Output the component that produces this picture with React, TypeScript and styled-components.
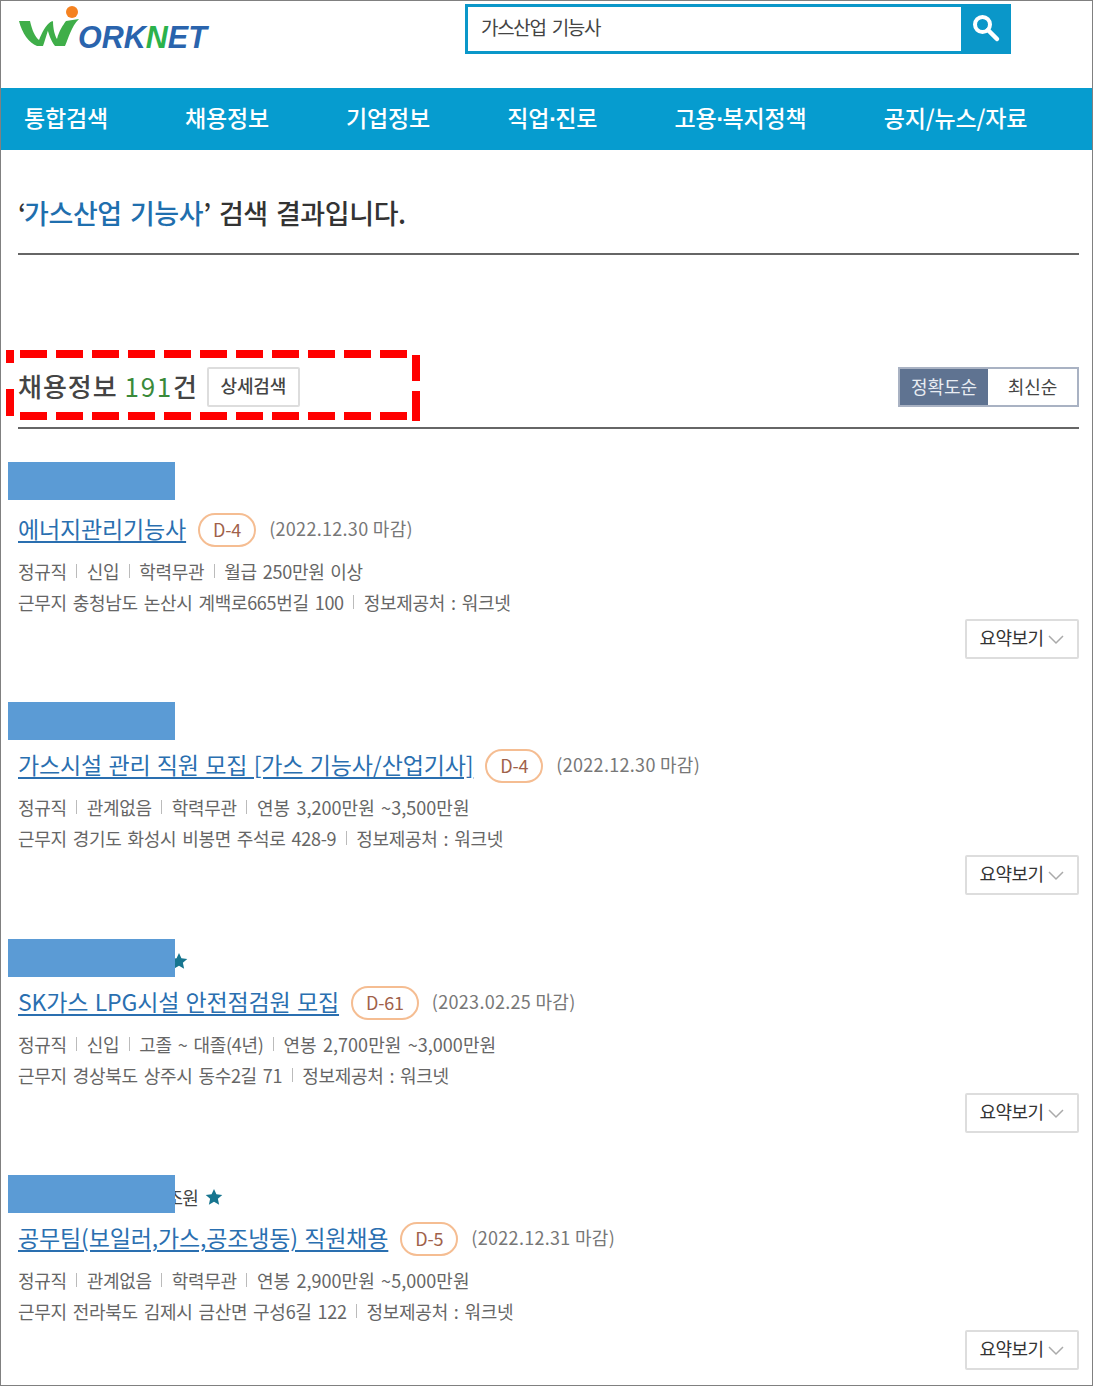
import React from "react";
import styled, { createGlobalStyle } from "styled-components";

const Global = createGlobalStyle`
  html, body { margin: 0; padding: 0; background: #fff; }
  * { box-sizing: border-box; }
  body { font-family: "Noto Sans CJK KR", "Noto Sans", sans-serif; }
`;

const Page = styled.div`
  position: relative;
  width: 1093px;
  height: 1386px;
  border: 1px solid #808080;
  overflow: hidden;
  background: #fff;
`;

const Header = styled.header`
  display: flex;
  height: 87px;
  padding-top: 3px;
`;

const LogoMark = styled.svg`
  display: block;
  width: 220px;
  height: 52px;
  margin-top: -3px;
`;

const SearchBox = styled.div`
  display: flex;
  width: 546px;
  height: 50px;
  margin-left: 244px;
  border: 3px solid #0a97c9;
`;

const SearchField = styled.div`
  flex: 1;
  display: flex;
  align-items: center;
  padding: 0 0 6px 13px;
  font-size: 19px;
  letter-spacing: -1.3px;
  word-spacing: 3px;
  color: #444;
`;

const SearchButton = styled.div`
  width: 47px;
  display: flex;
  align-items: center;
  justify-content: center;
  background: #0a97c9;
  padding: 0 0 3px 3px;
`;

const Nav = styled.nav`
  display: flex;
  gap: 77px;
  align-items: center;
  height: 62px;
  padding: 0 0 4px 23px;
  background: #069ccf;
`;

const NavItem = styled.a`
  font-size: 23px;
  font-weight: 500;
  letter-spacing: -0.15px;
  color: #fff;
  white-space: nowrap;
`;

const NavDot = styled.span`
  font-family: "Liberation Sans", sans-serif;
  font-weight: 700;
  letter-spacing: -1.5px;
`;

const Main = styled.main`
  padding: 0 13px 0 17px;
`;

const ResultTitle = styled.h1`
  display: flex;
  align-items: center;
  height: 105px;
  margin: 0 0 112px;
  padding-top: 22px;
  border-bottom: 2px solid #666;
  font-size: 27px;
  font-weight: 500;
  letter-spacing: -0.4px;
  word-spacing: 2.4px;
  color: #333;
`;

const Quote = styled.span`
  letter-spacing: -2px;
`;

const Keyword = styled.span`
  color: #1f6fae;
`;

const SectionHead = styled.div`
  display: flex;
  align-items: center;
  justify-content: space-between;
  height: 62px;
  padding-bottom: 20px;
  border-bottom: 2px solid #666;
`;

const SectionLeft = styled.div`
  display: flex;
  align-items: center;
  gap: 9px;
`;

const SectionTitle = styled.h2`
  margin: 0 0 4px;
  font-size: 26px;
  font-weight: 500;
  letter-spacing: 1px;
  color: #444;
`;

const Count = styled.span`
  font-weight: 400;
  letter-spacing: 1.7px;
  color: #3a8a3a;
`;

const DetailButton = styled.button`
  width: 93px;
  height: 40px;
  padding: 0 0 5px;
  background: #fff;
  border: 2px solid #ddd;
  border-radius: 2px;
  font: 500 18px "Noto Sans CJK KR", sans-serif;
  letter-spacing: -0.1px;
  color: #444;
`;

const SortGroup = styled.div`
  display: flex;
  width: 181px;
  height: 40px;
  border: 2px solid #a9b2c3;
`;

const SortOption = styled.div<{ $active?: boolean }>`
  display: flex;
  align-items: center;
  justify-content: center;
  padding-bottom: 3px;
  width: ${(p) => (p.$active ? "89px" : "90px")};
  background: ${(p) => (p.$active ? "#5f7391" : "#fff")};
  color: ${(p) => (p.$active ? "#e8ecf2" : "#444")};
  font-size: 18px;
  letter-spacing: -0.1px;
`;

const CardList = styled.div`
  display: flex;
  flex-direction: column;
  margin-top: 33px;
`;

const Card = styled.article<{ $height: number }>`
  position: relative;
  height: ${(p) => p.$height}px;
`;

const CompanyRow = styled.div<{ $height: number }>`
  display: flex;
  align-items: center;
  gap: 7px;
  height: ${(p) => p.$height}px;
  padding-bottom: 3px;
`;

const CompanyName = styled.span<{ $width: number }>`
  width: ${(p) => p.$width}px;
  font-size: 18px;
  letter-spacing: -0.8px;
  text-align: right;
  color: #444;
  white-space: nowrap;
`;

const Star = styled.svg`
  width: 18px;
  height: 18px;
  fill: #17758f;
`;

const Redaction = styled.div`
  position: absolute;
  left: -10px;
  top: 0;
  width: 167px;
  height: 38px;
  background: #5b9bd5;
`;

const TitleRow = styled.div`
  display: flex;
  align-items: center;
  height: 36px;
`;

const JobTitle = styled.a`
  padding-bottom: 4px;
  font-size: 23px;
  letter-spacing: -0.15px;
  word-spacing: 1.4px;
  color: #2a6fb0;
  text-decoration: underline;
  text-decoration-thickness: 1.5px;
  text-underline-offset: 3px;
  white-space: nowrap;
`;

const DeadlineBadge = styled.span`
  display: flex;
  align-items: center;
  justify-content: center;
  height: 34px;
  margin-left: 12px;
  padding: 0 13px 3px;
  border: 2px solid #f5bd92;
  border-radius: 17px;
  font-size: 18px;
  letter-spacing: -0.2px;
  color: #a0614a;
`;

const Deadline = styled.span`
  margin-left: 13px;
  padding-bottom: 5px;
  font-size: 18px;
  letter-spacing: 0.3px;
  color: #777;
`;

const MetaLine = styled.div<{ $top: number }>`
  display: flex;
  align-items: center;
  margin-top: ${(p) => p.$top}px;
  height: 24px;
  font-size: 18px;
  letter-spacing: -0.3px;
  word-spacing: 2.2px;
  color: #666;
  white-space: pre;
`;

const MetaItem = styled.span<{ $salary?: boolean }>`
  letter-spacing: ${(p) => (p.$salary ? "0.05px" : "-0.3px")};
`;

const Sep = styled.i`
  width: 1px;
  height: 14px;
  margin: 0 9.5px;
  background: #bbb;
`;

const SummaryButton = styled.button`
  position: absolute;
  right: 0;
  display: flex;
  align-items: center;
  justify-content: center;
  gap: 5px;
  width: 114px;
  height: 40px;
  padding: 0 0 5px;
  background: #fff;
  border: 2px solid #ddd;
  border-radius: 2px;
  font: 400 18px "Noto Sans CJK KR", sans-serif;
  letter-spacing: -0.6px;
  color: #333;
`;

const Chevron = styled.svg`
  width: 16px;
  height: 10px;
  margin-top: 6px;
  fill: none;
  stroke: #aaa;
  stroke-width: 1.5;
`;

const Annotation = styled.svg`
  position: absolute;
  left: 5px;
  top: 349px;
  width: 416px;
  height: 72px;
  fill: none;
  stroke: #ff0000;
  stroke-width: 8;
`;

const StarIcon = () => (
  <Star viewBox="0 0 20 20">
    <path d="M10 1l2.7 6 6.5.7-4.9 4.3 1.4 6.5L10 15.2l-5.7 3.3 1.4-6.5L.8 7.7l6.5-.7z" />
  </Star>
);

type Job = {
  height: number;
  companyHeight: number;
  companyWidth?: number;
  companyText?: string;
  star?: boolean;
  title: string;
  badge: string;
  deadline: string;
  meta: string[];
  place: string;
  buttonTop: number;
};

const jobs: Job[] = [
  {
    height: 240,
    companyHeight: 50,
    title: "에너지관리기능사",
    badge: "D-4",
    deadline: "(2022.12.30 마감)",
    meta: ["정규직", "신입", "학력무관", "월급 250만원 이상"],
    place: "근무지 충청남도 논산시 계백로665번길 100",
    buttonTop: 157,
  },
  {
    height: 237,
    companyHeight: 46,
    title: "가스시설 관리 직원 모집 [가스 기능사/산업기사]",
    badge: "D-4",
    deadline: "(2022.12.30 마감)",
    meta: ["정규직", "관계없음", "학력무관", "연봉 3,200만원 ~3,500만원"],
    place: "근무지 경기도 화성시 비봉면 주석로 428-9",
    buttonTop: 153,
  },
  {
    height: 236,
    companyHeight: 46,
    companyWidth: 145,
    star: true,
    title: "SK가스 LPG시설 안전점검원 모집",
    badge: "D-61",
    deadline: "(2023.02.25 마감)",
    meta: ["정규직", "신입", "고졸 ~ 대졸(4년)", "연봉 2,700만원 ~3,000만원"],
    place: "근무지 경상북도 상주시 동수2길 71",
    buttonTop: 154,
  },
  {
    height: 211,
    companyHeight: 46,
    companyWidth: 180,
    companyText: "조원",
    star: true,
    title: "공무팀(보일러,가스,공조냉동) 직원채용",
    badge: "D-5",
    deadline: "(2022.12.31 마감)",
    meta: ["정규직", "관계없음", "학력무관", "연봉 2,900만원 ~5,000만원"],
    place: "근무지 전라북도 김제시 금산면 구성6길 122",
    buttonTop: 155,
  },
];

const navItems = ["통합검색", "채용정보", "기업정보", "직업·진로", "고용·복지정책", "공지/뉴스/자료"];

export default function App() {
  return (
    <Page>
      <Global />
      <Header>
        <LogoMark viewBox="0 0 220 52">
          <circle cx="71" cy="11" r="6" fill="#f58220" />
          <path d="M18 20H29C31 29 34 36 38 39C41 32 44 24 51 20C47 27 45 37 42 45H36C28 42 21 32 18 20Z" fill="#3fae49" />
          <path d="M46 25C48 22 50 21 52 20C52 28 54 35 56 38C58 30 62 24 65 20L78 18C70 26 68 36 64 45H54C50 40 47 32 46 25Z" fill="#3fae49" />
          <text x="77" y="47" fontFamily="Liberation Sans" fontSize="30.5" fontWeight="700" fontStyle="italic" fill="#2a64ad">
            ORK<tspan fill="#2bb24c">N</tspan>ET
          </text>
        </LogoMark>
        <SearchBox>
          <SearchField>가스산업 기능사</SearchField>
          <SearchButton>
            <svg width="30" height="30" viewBox="0 0 30 30" fill="none" stroke="#fff">
              <circle cx="11.5" cy="11.5" r="7.5" strokeWidth="4" />
              <path d="M17 17l9 9" strokeWidth="4.5" strokeLinecap="round" />
            </svg>
          </SearchButton>
        </SearchBox>
      </Header>
      <Nav>
        {navItems.map((n) => {
          const parts = n.split("·");
          return (
            <NavItem key={n}>
              {parts[0]}
              {parts[1] && (
                <>
                  <NavDot>·</NavDot>
                  {parts[1]}
                </>
              )}
            </NavItem>
          );
        })}
      </Nav>
      <Main>
        <ResultTitle>
          <span>
            <Quote>‘</Quote>
            <Keyword>가스산업 기능사</Keyword>’ 검색 결과입니다.
          </span>
        </ResultTitle>
        <SectionHead>
          <SectionLeft>
            <SectionTitle>
              채용정보 <Count>191</Count>건
            </SectionTitle>
            <DetailButton>상세검색</DetailButton>
          </SectionLeft>
          <SortGroup>
            <SortOption $active>정확도순</SortOption>
            <SortOption>최신순</SortOption>
          </SortGroup>
        </SectionHead>
        <CardList>
          {jobs.map((j) => (
            <Card key={j.title} $height={j.height}>
              <CompanyRow $height={j.companyHeight}>
                {j.companyWidth !== undefined && (
                  <CompanyName $width={j.companyWidth}>{j.companyText}</CompanyName>
                )}
                {j.star && <StarIcon />}
              </CompanyRow>
              <Redaction />
              <TitleRow>
                <JobTitle>{j.title}</JobTitle>
                <DeadlineBadge>{j.badge}</DeadlineBadge>
                <Deadline>{j.deadline}</Deadline>
              </TitleRow>
              <MetaLine $top={11}>
                {j.meta.map((m, i) => (
                  <React.Fragment key={m}>
                    {i > 0 && <Sep />}
                    <MetaItem $salary={m.startsWith("연봉")}>{m}</MetaItem>
                  </React.Fragment>
                ))}
              </MetaLine>
              <MetaLine $top={7}>
                {j.place}
                <Sep />
                정보제공처 : 워크넷
              </MetaLine>
              <SummaryButton style={{ top: j.buttonTop }}>
                요약보기
                <Chevron viewBox="0 0 16 10">
                  <path d="M1 1l7 7 7-7" />
                </Chevron>
              </SummaryButton>
            </Card>
          ))}
        </CardList>
      </Main>
      <Annotation viewBox="0 0 416 72">
        <path d="M14 4H401M14 66H401" strokeDasharray="27 9" />
        <path d="M4 0V13M4 39V66M410 5V31M410 41V71" />
      </Annotation>
    </Page>
  );
}
